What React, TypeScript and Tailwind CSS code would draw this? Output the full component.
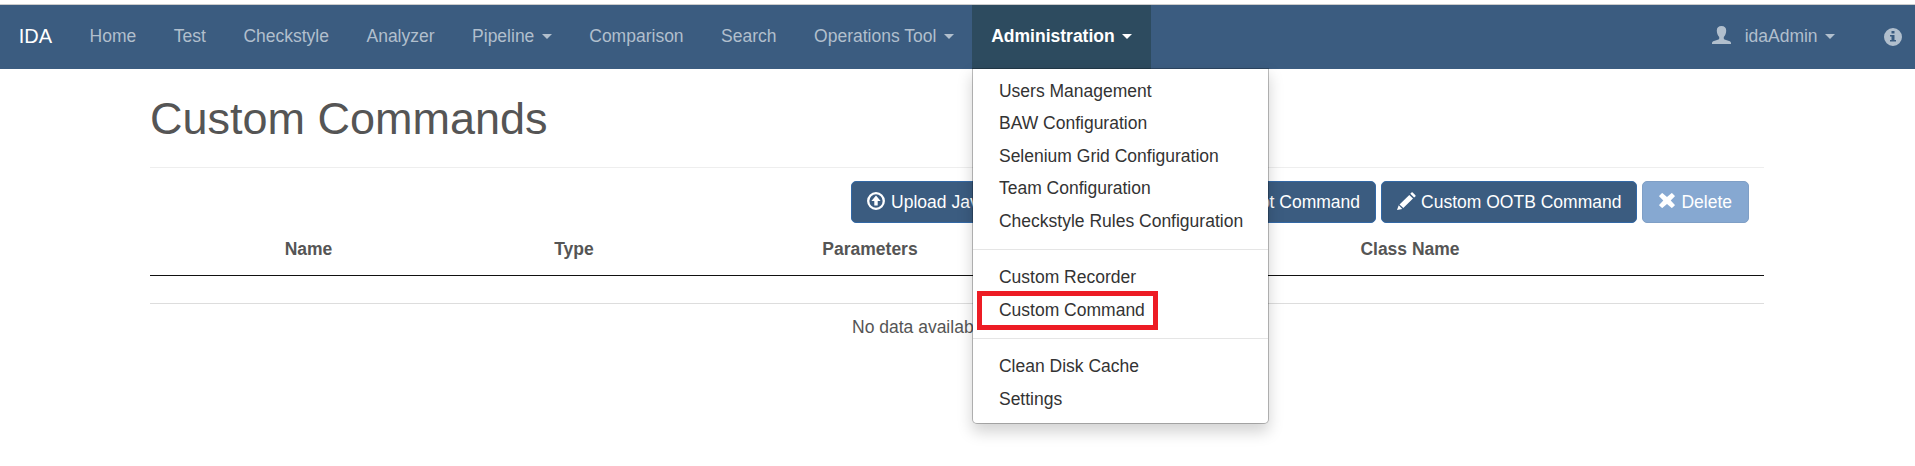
import React from "react";

const Caret = () => (
  <span className="mt-px ml-[7.4px] h-0 w-0 border-x-[5px] border-t-[5px] border-x-transparent border-t-current" />
);

const navItems = [
  { label: "Home" },
  { label: "Test" },
  { label: "Checkstyle" },
  { label: "Analyzer" },
  { label: "Pipeline", caret: true },
  { label: "Comparison" },
  { label: "Search" },
  { label: "Operations Tool", caret: true },
];

const menuGroups = [
  ["Users Management", "BAW Configuration", "Selenium Grid Configuration", "Team Configuration", "Checkstyle Rules Configuration"],
  ["Custom Recorder", "Custom Command"],
  ["Clean Disk Cache", "Settings"],
];

const UserIcon = () => (
  <svg className="mb-[3px] h-[18px] w-[19px]" viewBox="0 0 19 18" fill="currentColor">
    <path d="M9.500 0C6.500 0 4.800 1.600 4.800 4.600c0 2.600 1 5.200 2.400 6.400v1.400c0 .5-.2.800-.7 1L1.200 15.300Q0 15.800 0 17V18h19v-1q0-1.200-1.200-1.700l-5.300-1.900c-.5-.2-.7-.5-.7-1V11C13.200 9.800 14.200 7.200 14.200 4.600 14.200 1.600 12.500 0 9.500 0Z" />
  </svg>
);

const InfoIcon = () => (
  <svg className="h-[18px] w-[18px]" viewBox="0 0 18 18" fill="currentColor">
    <path fillRule="evenodd" d="M9 0a9 9 0 1 1 0 18A9 9 0 0 1 9 0ZM7.500 3v2.500h3V3ZM6 7v1.500h1.500V12H6v1.500h6V12h-1.500V7Z" />
  </svg>
);

const UploadIcon = () => (
  <svg className="mb-[3px] h-[18px] w-[18px]" viewBox="0 0 18 18">
    <circle cx="9" cy="9" r="7.800" fill="none" stroke="currentColor" strokeWidth="2.300" />
    <path fill="currentColor" d="M9 3.600 13.600 9H10.700v4.500H7.300V9H4.400Z" />
  </svg>
);

const PencilIcon = () => (
  <svg className="mb-[3px] h-[18px] w-[19px]" viewBox="0 0 19 18" fill="currentColor">
    <path d="M14.500.6q.6-.6 1.200 0l2.700 2.600q.5.6 0 1.200l-1.300 1.200-3.800-3.800ZM12.300 2.900 16 6.600 6.300 16.100 2.500 12.400ZM1.700 13.300 5.300 16.900 0 18Z" />
  </svg>
);

const RemoveIcon = () => (
  <svg className="mb-[3px] h-[15px] w-[16px]" viewBox="0 0 16 16" preserveAspectRatio="none" fill="currentColor">
    <path d="M3.600.3 8 4.300 12.400.3q.4-.4.800 0l2.500 2.500q.4.400 0 .8L11.700 8l4 4.400q.4.400 0 .8l-2.500 2.500q-.4.400-.8 0L8 11.700l-4.400 4q-.4.400-.8 0L.3 13.200q-.4-.4 0-.8L4.300 8 .3 3.600q-.4-.4 0-.8L2.800.3q.4-.4.800 0Z" />
  </svg>
);

const buttonClass =
  "flex h-[42px] items-center rounded-[5px] border border-[#3368a5] bg-[#3b5c80] px-[15px] whitespace-nowrap text-white";

export default function App() {
  return (
    <div className="min-h-[466px] w-full overflow-hidden bg-white pt-1 font-['Liberation_Sans',Arial,sans-serif] text-[17.5px] leading-[25px] text-[#555]">
      <nav className="flex h-[65px] items-stretch border-t border-[#ccc] bg-[#3b5c80] text-[#b1bfcd]">
        <a className="px-[18.75px] pt-[18.75px] text-[20px] text-white">IDA</a>
        {navItems.map((item) => (
          <a key={item.label} className="flex h-[62.5px] items-center px-[18.75px] whitespace-nowrap">
            {item.label}
            {item.caret && <Caret />}
          </a>
        ))}
        <div className="relative z-10 bg-[#2d4b5f]">
          <a className="flex h-[62.5px] items-center px-[18.75px] font-bold whitespace-nowrap text-white">
            Administration
            <Caret />
          </a>
          <div className="absolute top-[63px] left-0 w-[297px] rounded-b-[5px] border border-black/25 bg-white bg-clip-padding pt-[6px] pb-[7.5px] text-[#333] shadow-[0_7.5px_15px_rgba(0,0,0,0.175)]">
            {menuGroups.map((group, index) => (
              <React.Fragment key={group[0]}>
                {index > 0 && <div className="my-[11.5px] h-px bg-[#e5e5e5]" />}
                {group.map((label) => (
                  <a key={label} className="relative block px-[25.5px] py-[3.75px] whitespace-nowrap">
                    {label}
                    {label === "Custom Command" && (
                      <span className="absolute -top-[3.5px] left-[4px] h-[39px] w-[181px] border-5 border-[#ed1c24]" />
                    )}
                  </a>
                ))}
              </React.Fragment>
            ))}
          </div>
        </div>
        <div className="ml-auto flex h-[62.5px] items-center">
          <UserIcon />
          <span className="ml-[14px]">idaAdmin</span>
          <Caret />
          <span className="mt-[2px] mr-[13px] ml-[49px]">
            <InfoIcon />
          </span>
        </div>
      </nav>

      <main className="ml-[150px] w-[1614px]">
        <h1 className="h-[99px] border-b border-[#eee] pt-[25px] text-[45px] leading-[50px]">Custom Commands</h1>
        <div className="mt-[13px] flex justify-end gap-1 pr-[15px]">
          <div className="mr-[0.5px] flex w-[525px] gap-[5px]">
            <button className={buttonClass}>
              <UploadIcon />
              <span className="ml-[6px]">Upload Java Command</span>
            </button>
            <button className={buttonClass + " flex-1 justify-end"}>Upload JavaScript Command</button>
          </div>
          <button className={buttonClass + " mr-px"}>
            <PencilIcon />
            <span className="ml-[5.5px]">Custom OOTB Command</span>
          </button>
          <button className="flex h-[42px] items-center rounded-[5px] border border-[#7f9fc6] bg-[#86a8d1] px-[16px] text-white">
            <RemoveIcon />
            <span className="ml-[6px]">Delete</span>
          </button>
        </div>
        <div className="grid h-[53px] grid-cols-[317px_214px_378px_1fr] border-b border-[#111] pt-[14px] pr-[3px] text-center font-bold">
          <span>Name</span>
          <span>Type</span>
          <span>Parameters</span>
          <span>Class Name</span>
        </div>
        <div className="h-[28px] border-b border-[#ddd]" />
        <p className="pt-[11px] pl-[702px]">No data available in table</p>
      </main>
    </div>
  );
}
